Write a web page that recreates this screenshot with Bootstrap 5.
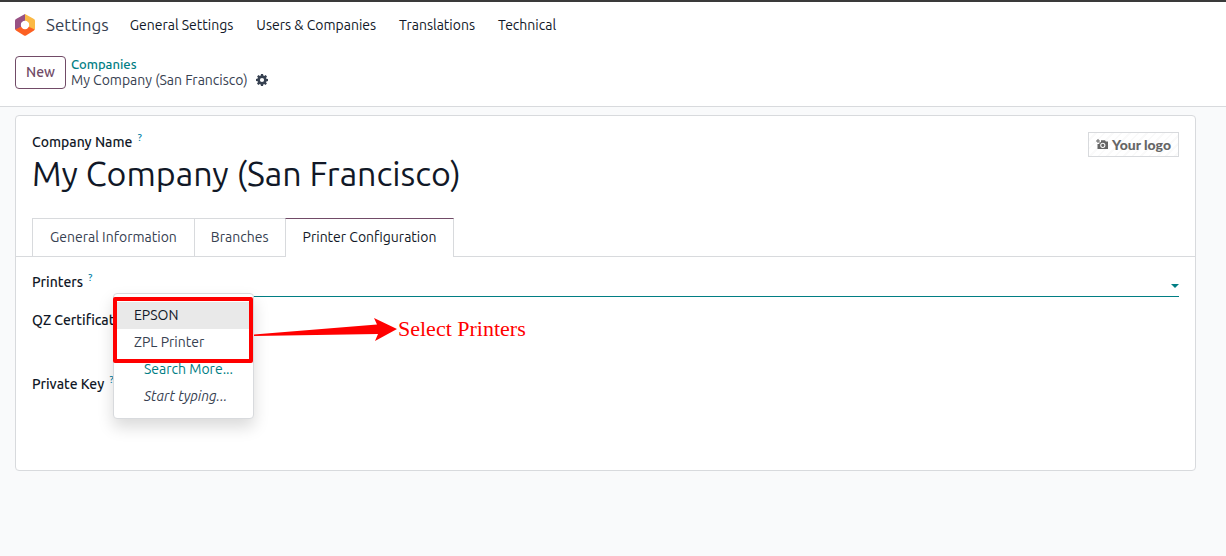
<!DOCTYPE html>
<html lang="en">
<head>
<meta charset="utf-8">
<meta name="viewport" content="width=device-width, initial-scale=1">
<title>Settings - My Company (San Francisco)</title>
<link href="https://cdn.jsdelivr.net/npm/bootstrap@5.3.0/dist/css/bootstrap.min.css" rel="stylesheet">
<style>
  :root { --plum: #714b67; --teal: #017e84; --ink: #111827; --slate: #374151; --line: #d8dadd; }
  body { font-family: Ubuntu, "Noto Sans", sans-serif; font-size: 14px; line-height: 20px; color: var(--slate); background: #f9fafb; }
  a { text-decoration: none; }
  .top-area { border-top: 2px solid #3a3a3a; border-bottom: 1px solid var(--line); }
  .main-nav { min-height: 46px; padding: 0 15px; }
  .app-name { font-size: 17px; color: var(--slate); margin: 0 21px 0 11px; }
  .main-nav .nav-link { color: var(--ink); padding: 0; }
  .menu-links { gap: 23px; }
  .crumb-bar { padding: 8px 15px 17px; gap: 5px; }
  .btn-new { font-size: 14px; line-height: 19px; font-weight: 500; color: var(--plum); border: 1px solid var(--plum); border-radius: 4px; padding: 6px 10px; }
  .crumbs { line-height: 16px; padding-bottom: 1px; }
  .crumbs a { font-weight: 500; font-size: 13px; color: var(--teal); }
  .gear { border: 0; background: none; padding: 0; color: var(--slate); }
  .sheet { margin: 8px 30px 24px 15px; border: 1px solid var(--line); border-radius: 4px; padding: 16px 16px 48px; }
  .field-label { font-weight: 500; color: var(--ink); white-space: nowrap; }
  .hint { color: #0180a5; font-size: 10px; font-weight: 500; line-height: 1; top: -6px; margin-left: 2px; }
  .title-input { display: block; width: 100%; border: 0; padding: 0 0 2px; font-size: 34px; line-height: 42px; height: 44px; color: var(--ink); background: none; }
  .logo-btn { font-family: Lato, sans-serif; font-weight: 900; font-size: 14px; line-height: 15px; color: #666; border: 1px solid var(--line); background: repeating-linear-gradient(135deg, #fff 0 4px, #fafafa 4px 6px); padding: 4px 7px; }
  .sheet-tabs { margin: 22px -16px 0; padding: 0 16px; border-bottom: 1px solid var(--line); }
  .sheet-tabs .nav-link { color: var(--slate); background: #fff; border: 1px solid var(--line); border-right-width: 0; border-bottom: 0; border-radius: 0; padding: 8px 17px 9px; margin: 0; min-height: 38px; }
  .sheet-tabs .nav-link:nth-child(2) { padding-left: 16px; padding-right: 16px; }
  .sheet-tabs .nav-link.active { color: var(--ink); border-top-color: var(--plum); border-right-width: 1px; margin-bottom: -1px; padding-bottom: 10px; }
  .form-row { display: grid; grid-template-columns: 100px 1fr; }
  .line-input { display: block; border: 0; border-bottom: 1px solid var(--teal); border-radius: 0; outline: 0; width: 100%; height: 25px; padding: 0 20px 0 8px; background: none; }
  .caret { right: 0; top: 12px; width: 8px; height: 4px; }
  .blank-area { border: 0; width: 100%; height: 48px; resize: none; background: none; display: block; }
  .form-rows { padding-top: 15px; }
  .printer-row { margin-bottom: 13px; }
  .choices { left: 81px; top: 21px; width: 141px; height: 126px; border: 1px solid var(--line); border-radius: 4px; background: #fff; box-shadow: 0 8px 16px rgba(0,0,0,.15); padding: 8px 0; z-index: 3; }
  .choices .dropdown-item { line-height: 21px; padding: 3px 20px; color: var(--slate); }
  .choices .dropdown-item.picked { background: #e9e9e9; color: var(--ink); }
  .choices .dropdown-item.inner { padding: 3px 0 3px 30px; }
  .choices .dropdown-item.more { color: var(--teal); }
  .frame { left: -1px; top: 3px; width: 140px; height: 66px; border: 4px solid #f00; border-radius: 2px; pointer-events: none; }
  .callout-note { left: 140px; top: 23px; color: #f00; font-family: "Liberation Serif", serif; font-size: 22px; line-height: 24px; gap: 1px; white-space: nowrap; }
</style>
</head>
<body>
<header class="top-area bg-white">
  <nav class="main-nav d-flex align-items-center" aria-label="Main">
    <svg width="20" height="22" viewBox="0 0 20 22" aria-hidden="true">
      <path fill="#985184" d="M10 0 1 5Q0 5.600 0 6.700V15.300L1 16 6.500 12.700V9L10 7Z"/>
      <path fill="#fbb945" d="M10 0 19 5Q20 5.600 20 6.700V15.300L19 16 13.500 12.700V9L10 7Z"/>
      <path fill="#fc6022" d="M.3 15.500 6.500 12.500 10 15 13.500 12.500 19.700 15.500 19 16.500 11 21.500Q10 22.200 9 21.500L1 16.500Z"/>
      <circle cx="10" cy="11" r="4.200" fill="#fff"/>
    </svg>
    <a class="app-name" href="#">Settings</a>
    <div class="menu-links d-flex">
      <a class="nav-link" href="#">General Settings</a>
      <a class="nav-link" href="#">Users &amp; Companies</a>
      <a class="nav-link" href="#">Translations</a>
      <a class="nav-link" href="#">Technical</a>
    </div>
  </nav>
  <div class="crumb-bar d-flex align-items-center">
    <button type="button" class="btn btn-new">New</button>
    <div class="crumbs d-flex flex-column">
      <a href="#">Companies</a>
      <div class="d-flex align-items-center gap-2">
        <span>My Company (San Francisco)</span>
        <button type="button" class="gear d-flex" aria-label="Actions">
          <svg width="12" height="12" viewBox="0 0 12 12" aria-hidden="true"><path fill="currentColor" fill-rule="evenodd" d="M5 0h2l.4 1.600.8.4L9.600 1.100 11 2.500 10 3.900l.4.900L12 5v2l-1.600.4-.4.800.9 1.400L9.500 11 8.100 10l-.8.4L7 12H5l-.4-1.600-.8-.4-1.400.9L1 9.500 2 8.100l-.4-.8L0 7V5l1.600-.4.4-.8-.9-1.400L2.500 1 3.900 2l.8-.4ZM6 3.900a2.100 2.100 0 1 0 0 4.200 2.100 2.100 0 0 0 0-4.200Z"/></svg>
        </button>
      </div>
    </div>
  </div>
</header>

<main class="sheet bg-white">
  <div class="d-flex align-items-start">
    <div class="flex-grow-1">
      <label class="field-label d-block" for="company">Company Name <sup class="hint">?</sup></label>
      <input class="title-input" id="company" type="text" value="My Company (San Francisco)">
    </div>
    <button type="button" class="logo-btn d-flex align-items-center gap-1 flex-shrink-0">
      <svg width="12" height="11" viewBox="0 0 12 11" aria-hidden="true"><path fill="#666" fill-rule="evenodd" d="M1.500 0h1v1.500H4v1H2.500V4h-1V2.500H0v-1h1.500ZM5 1.300h4l.8 1.200H12V10H1.500V5h1.800V3.300H5ZM6.800 3.700a2.600 2.600 0 1 0 0 5.200 2.600 2.600 0 0 0 0-5.200Zm0 1a1.600 1.600 0 1 1 0 3.200 1.600 1.600 0 0 1 0-3.200Z"/></svg>
      <span>Your logo</span>
    </button>
  </div>

  <div class="sheet-tabs nav" role="tablist">
    <button type="button" class="nav-link" role="tab">General Information</button>
    <button type="button" class="nav-link" role="tab">Branches</button>
    <button type="button" class="nav-link active" role="tab" aria-selected="true">Printer Configuration</button>
  </div>

  <div class="form-rows">
    <div class="form-row printer-row position-relative">
      <label class="field-label" for="printers">Printers <sup class="hint">?</sup></label>
      <div class="position-relative">
        <input class="line-input" id="printers" type="text" autocomplete="off">
        <svg class="caret position-absolute" viewBox="0 0 8 4" aria-hidden="true"><path fill="#017e84" d="M0 0h8L4 4Z"/></svg>
      </div>
      <div class="choices position-absolute">
        <a class="dropdown-item picked" href="#">EPSON</a>
        <a class="dropdown-item" href="#">ZPL Printer</a>
        <a class="dropdown-item inner more" href="#">Search More...</a>
        <span class="dropdown-item inner fst-italic">Start typing...</span>
        <div class="frame position-absolute"></div>
        <div class="callout-note position-absolute d-flex align-items-center">
          <svg width="143" height="24" viewBox="0 0 143 24" aria-hidden="true"><path fill="#f00" d="M0 17.500 123 7.500 120 1 143 12 121 24 124 17 0 19Z"/></svg>
          <span>Select Printers</span>
        </div>
      </div>
    </div>
    <div class="form-row mb-3">
      <label class="field-label" for="cert">QZ Certificate</label>
      <textarea class="blank-area" id="cert"></textarea>
    </div>
    <div class="form-row">
      <label class="field-label" for="pkey">Private Key <sup class="hint">?</sup></label>
      <textarea class="blank-area" id="pkey"></textarea>
    </div>
  </div>
</main>
<script src="https://cdn.jsdelivr.net/npm/bootstrap@5.3.0/dist/js/bootstrap.bundle.min.js"></script>
</body>
</html>
